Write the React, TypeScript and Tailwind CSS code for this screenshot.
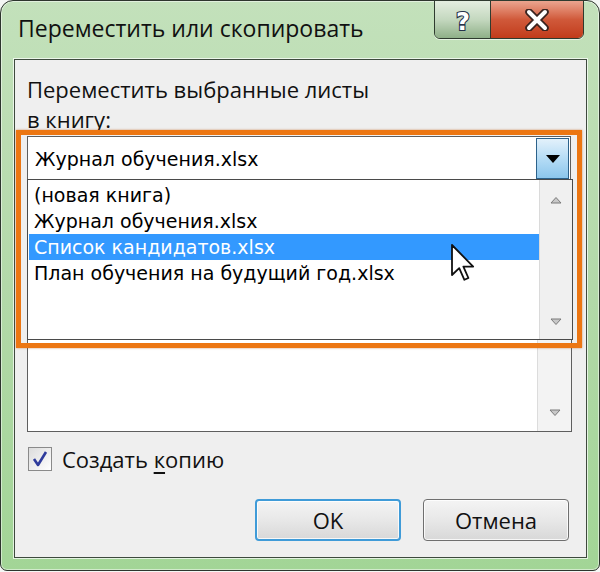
import React from 'react';

const ui = { fontFamily: '"Open Sans", "Noto Sans", sans-serif' };
const list = { fontFamily: '"DejaVu Sans", "Noto Sans", sans-serif' };

const Arrow: React.FC<{ up?: boolean }> = ({ up }) => (
  <svg width="12" height="8" viewBox="0 0 12 8">
    {up ? (
      <path d="M1 7 L6 1.5 L11 7 Z" fill="#c8c8c8" stroke="#7a7a7a" strokeWidth="1" />
    ) : (
      <path d="M1 1 L6 6.5 L11 1 Z" fill="#c8c8c8" stroke="#7a7a7a" strokeWidth="1" />
    )}
  </svg>
);

const Cursor: React.FC = () => (
  <svg className="absolute left-[435px] top-[183px]" width="26" height="40" viewBox="0 0 13 20">
    <path
      d="M1 1 L1 16 L4.6 12.6 L7.2 18.4 L9.2 17.5 L6.7 11.8 L11.6 11.8 Z"
      fill="#ffffff"
      stroke="#111111"
      strokeWidth="0.9"
      strokeLinejoin="round"
    />
  </svg>
);

const TitleButtons: React.FC = () => (
  <div className="flex h-[39px] mr-[15px] -mt-px border border-[#2f3b2f] rounded-b-[6px] overflow-hidden shadow-[0_1px_0_rgba(255,255,255,0.6)]">
    <div className="w-[56px] flex items-center justify-center border-r border-[#2f3b2f] bg-gradient-to-b from-[#e4eee0] via-[#c4d8bf] to-[#8fb088]">
      <svg width="26" height="32" viewBox="0 0 26 32">
        <text
          x="13"
          y="26"
          textAnchor="middle"
          fontFamily="DejaVu Sans, sans-serif"
          fontWeight="bold"
          fontSize="24"
          fill="#ffffff"
          stroke="#26324a"
          strokeWidth="2.2"
          paintOrder="stroke"
        >
          ?
        </text>
      </svg>
    </div>
    <div className="w-[92px] flex items-center justify-center bg-gradient-to-b from-[#eba58f] via-[#d0593a] to-[#c13b1a]">
      <svg width="24" height="22" viewBox="0 0 24 22">
        <path d="M4 3 L20 19 M20 3 L4 19" stroke="#3a2420" strokeWidth="7.5" strokeLinecap="round" />
        <path d="M4 3 L20 19 M20 3 L4 19" stroke="#ffffff" strokeWidth="4" strokeLinecap="round" />
      </svg>
    </div>
  </div>
);

export default function App() {
  return (
    <div className="w-[600px] h-[572px] bg-[#f4f6f4]">
      <div className="h-[571px] flex flex-col rounded-t-[13px] rounded-b-[7px] border border-[#2d352d] bg-gradient-to-b from-[#c3e1bb] via-[#b3d9a9] to-[#a2d596] shadow-[inset_0_0_0_1px_rgba(255,255,255,0.5)]">
        <div className="h-[58px] flex items-start">
          <div className="pl-[17px] pt-[12px] text-[23px] leading-[30px] text-[#111]" style={ui}>
            Переместить или скопировать
          </div>
          <div className="ml-auto">
            <TitleButtons />
          </div>
        </div>

        <div className="relative mx-[13px] mr-[12px] mb-[12px] flex-1 flex flex-col border border-[#3e4a3e] bg-[#efefef] pl-[12px] pr-[15px] shadow-[0_0_0_1px_rgba(255,255,255,0.7)]">
          <div className="pt-[14px] text-[22px] leading-[30px] text-[#111]" style={ui}>
            <div>Переместить выбранные листы</div>
            <div>в книгу:</div>
          </div>

          <div className="mt-[2px] h-[43px] flex border border-[#5e5e5e] border-b-0 bg-white">
            <div className="flex-1 pl-[7px] pt-[9px] text-[19px] leading-[26px] text-black" style={list}>
              Журнал обучения.xlsx
            </div>
            <div className="w-[33px] mt-[1px] mr-px flex items-center justify-center border border-[#2c628b] bg-gradient-to-b from-[#e3f1fb] via-[#b5dcf5] to-[#8cc6ec]">
              <svg width="14" height="8" viewBox="0 0 14 8">
                <path d="M0 0 L14 0 L7 8 Z" fill="#000" />
              </svg>
            </div>
          </div>

          <div className="relative h-[253px] flex border border-[#5e5e5e] bg-white mr-[-1px]">
            <div className="flex-1" />
            <div className="w-[34px] flex flex-col items-center justify-end pb-[14px] border-l border-[#dcdcdc] bg-[#f3f3f3]">
              <Arrow />
            </div>

            <div className="absolute left-[-1px] right-[-2px] top-[-1px] h-[161px] flex border border-[#4a4a4a] bg-white" style={list}>
              <div className="flex-1 pt-[2px] pl-[1px] text-[19px] leading-[26px] text-black">
                <div className="pl-[5px]">(новая книга)</div>
                <div className="pl-[5px]">Журнал обучения.xlsx</div>
                <div className="pl-[5px] bg-[#3399ff] text-white">Список кандидатов.xlsx</div>
                <div className="pl-[5px]">План обучения на будущий год.xlsx</div>
              </div>
              <div className="w-[33px] flex flex-col items-center justify-between pt-[16px] pb-[13px] border-l border-[#dadada] bg-[#f0f0f0]">
                <Arrow up />
                <Arrow />
              </div>
            </div>
          </div>

          <div className="mt-[12px] flex items-center gap-[10px]">
            <div className="ml-px w-[24px] h-[24px] flex items-center justify-center border border-[#8a8a8a] bg-gradient-to-br from-[#dcdcdc] to-[#ffffff]">
              <svg width="18" height="18" viewBox="0 0 18 18">
                <path d="M3 9 L7 15 L15 2" fill="none" stroke="#2f3c9c" strokeWidth="2.6" strokeLinejoin="round" />
              </svg>
            </div>
            <div className="text-[22px] leading-[30px] text-[#111]" style={ui}>
              Создать <span className="underline underline-offset-[4px] decoration-[1.5px]">к</span>опию
            </div>
          </div>

          <div className="mt-[25px] flex justify-end gap-[22px] mr-[2px]">
            <button
              className="w-[146px] h-[42px] rounded-[4px] border-2 border-[#3f9bd8] bg-gradient-to-b from-[#f4f4f4] via-[#e8e8e8] to-[#d8d8d8] text-[22px] text-[#111] shadow-[inset_0_0_0_1px_rgba(255,255,255,0.8)]"
              style={ui}
            >
              OK
            </button>
            <button
              className="w-[146px] h-[42px] rounded-[4px] border border-[#6f6f6f] bg-gradient-to-b from-[#f4f4f4] via-[#e8e8e8] to-[#d8d8d8] text-[22px] text-[#111] shadow-[inset_0_0_0_1px_rgba(255,255,255,0.8)]"
              style={ui}
            >
              Отмена
            </button>
          </div>

          <div className="absolute left-[1px] top-[70px] w-[566px] h-[218px] border-[5px] border-[#ec7612] shadow-[0_0_2px_rgba(180,80,0,0.6)] pointer-events-none" />
          <Cursor />
        </div>
      </div>
    </div>
  );
}
